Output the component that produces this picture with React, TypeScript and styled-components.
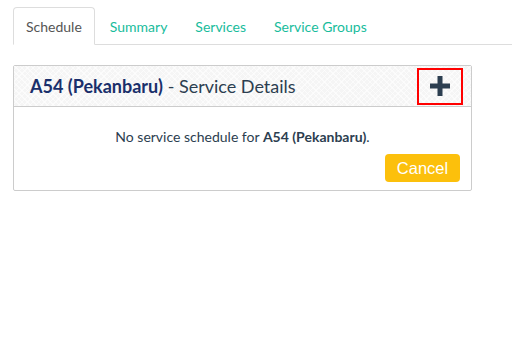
import React from "react"
import styled, { createGlobalStyle } from "styled-components"

const GlobalStyle = createGlobalStyle`
  body {
    margin: 0;
    background: #fff;
    font-family: Lato, "Open Sans", sans-serif;
    color: #333;
  }
`

const tabs = ["Schedule", "Summary", "Services", "Service Groups"]

function App() {
  const station = "A54 (Pekanbaru)"
  return (
    <>
      <GlobalStyle />
      <Page>
        <TabBar>
          {tabs.map((t, i) => (
            <Tab key={t} $active={i === 0}>
              {t}
            </Tab>
          ))}
        </TabBar>
        <Panel>
          <PanelHeader>
            <Title>
              <strong>{station}</strong> - Service Details
            </Title>
            <AddButton aria-label="Add">
              <svg width="20" height="20" viewBox="0 0 20 20">
                <path d="M7.5 0h5v7.5h7.5v5h-7.5v7.5h-5v-7.5h-7.5v-5h7.5z" fill="#2c3e50" />
              </svg>
            </AddButton>
          </PanelHeader>
          <PanelBody>
            <Message>
              No service schedule for <b>{station}</b>.
            </Message>
            <Actions>
              <CancelButton>Cancel</CancelButton>
            </Actions>
          </PanelBody>
        </Panel>
      </Page>
    </>
  )
}

export default App

const Page = styled.div`
  padding: 7px 0 0 13px;
`
const TabBar = styled.div`
  display: flex;
  border-bottom: 1px solid #ddd;
  height: 38px;
  box-sizing: border-box;
  margin-bottom: 20px;
`
const Tab = styled.div<{ $active?: boolean }>`
  padding: 0 12px 0 ${(p) => (p.$active ? "12px" : "13px")};
  height: 38px;
  box-sizing: border-box;
  display: flex;
  align-items: center;
  font-size: 14px;
  color: ${(p) => (p.$active ? "#555" : "#18bc9c")};
  border: 1px solid ${(p) => (p.$active ? "#ddd" : "transparent")};
  border-bottom-color: ${(p) => (p.$active ? "#fff" : "transparent")};
  border-radius: 4px 4px 0 0;
  background: ${(p) => (p.$active ? "#fff" : "transparent")};
  margin-right: 1px;
`
const Panel = styled.div`
  width: 459px;
  box-sizing: border-box;
  border: 1px solid #ccc;
  border-radius: 2px;
`
const PanelHeader = styled.div`
  display: flex;
  align-items: center;
  justify-content: space-between;
  height: 41px;
  box-sizing: border-box;
  padding: 0 8px 0 16px;
  background-color: #f5f5f5;
  background-image: repeating-linear-gradient(
      45deg,
      rgba(255, 255, 255, 0.6) 0 1px,
      transparent 1px 4px
    ),
    repeating-linear-gradient(
      -45deg,
      rgba(255, 255, 255, 0.6) 0 1px,
      transparent 1px 4px
    );
  border-bottom: 1px solid #ccc;
`
const Title = styled.div`
  font-size: 18px;
  color: #2c3e50;
  strong {
    color: #1a2f6b;
    font-weight: 700;
  }
`
const AddButton = styled.button`
  width: 46px;
  height: 37px;
  border: 2px solid #f00;
  background: transparent;
  display: flex;
  align-items: center;
  justify-content: center;
  padding: 0;
`
const PanelBody = styled.div`
  padding: 21px 11px 8px;
`
const Message = styled.div`
  text-align: center;
  font-size: 14px;
  color: #2c3e50;
  b {
    font-weight: 700;
  }
`
const Actions = styled.div`
  display: flex;
  justify-content: flex-end;
  margin-top: 9px;
`
const CancelButton = styled.button`
  font-family: "Liberation Sans", Arial, sans-serif;
  font-size: 16.5px;
  color: #fff;
  background: #fcc00c;
  border: none;
  border-radius: 4px;
  width: 75px;
  height: 28px;
  padding: 0;
`
